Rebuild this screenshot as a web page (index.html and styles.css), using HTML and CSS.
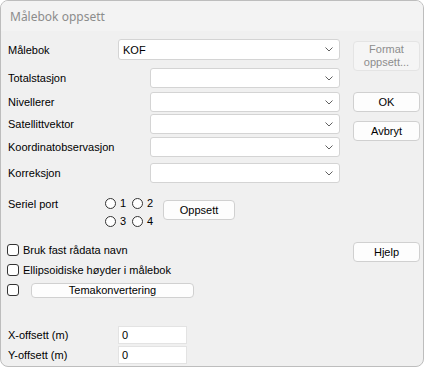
FILE: index.html
```html
<!DOCTYPE html>
<html>
<head>
<meta charset="utf-8">
<link rel="stylesheet" href="styles.css">
</head>
<body>
<div class="window">
  <div class="titlebar">Målebok oppsett</div>
  <div class="content">
    <div class="main">
      <div class="row row-malebok">
        <span class="label w-wide">Målebok</span>
        <div class="combo combo-wide"><span class="combo-text">KOF</span><svg class="chev" width="8" height="5" viewBox="0 0 8 5"><polyline points="0.5,0.5 4,4 7.5,0.5" fill="none" stroke="#606060" stroke-width="1"/></svg></div>
      </div>
      <div class="row row-total">
        <span class="label w-narrow">Totalstasjon</span>
        <div class="combo"><span class="combo-text"></span><svg class="chev" width="8" height="5" viewBox="0 0 8 5"><polyline points="0.5,0.5 4,4 7.5,0.5" fill="none" stroke="#606060" stroke-width="1"/></svg></div>
      </div>
      <div class="row row-niv">
        <span class="label w-narrow">Nivellerer</span>
        <div class="combo"><span class="combo-text"></span><svg class="chev" width="8" height="5" viewBox="0 0 8 5"><polyline points="0.5,0.5 4,4 7.5,0.5" fill="none" stroke="#606060" stroke-width="1"/></svg></div>
      </div>
      <div class="row row-sat">
        <span class="label w-narrow">Satellittvektor</span>
        <div class="combo"><span class="combo-text"></span><svg class="chev" width="8" height="5" viewBox="0 0 8 5"><polyline points="0.5,0.5 4,4 7.5,0.5" fill="none" stroke="#606060" stroke-width="1"/></svg></div>
      </div>
      <div class="row row-koord">
        <span class="label w-narrow">Koordinatobservasjon</span>
        <div class="combo"><span class="combo-text"></span><svg class="chev" width="8" height="5" viewBox="0 0 8 5"><polyline points="0.5,0.5 4,4 7.5,0.5" fill="none" stroke="#606060" stroke-width="1"/></svg></div>
      </div>
      <div class="row row-korr">
        <span class="label w-narrow">Korreksjon</span>
        <div class="combo"><span class="combo-text"></span><svg class="chev" width="8" height="5" viewBox="0 0 8 5"><polyline points="0.5,0.5 4,4 7.5,0.5" fill="none" stroke="#606060" stroke-width="1"/></svg></div>
      </div>
      <div class="serial">
        <span class="label serial-label">Seriel port</span>
        <div class="radios">
          <label class="radio"><span class="circle"></span><span class="rtext">1</span></label>
          <label class="radio"><span class="circle"></span><span class="rtext">2</span></label>
          <label class="radio"><span class="circle"></span><span class="rtext">3</span></label>
          <label class="radio"><span class="circle"></span><span class="rtext">4</span></label>
        </div>
        <div class="btn btn-oppsett">Oppsett</div>
      </div>
      <div class="check check-first"><span class="box"></span><span class="ctext">Bruk fast rådata navn</span></div>
      <div class="check check-second"><span class="box"></span><span class="ctext">Ellipsoidiske høyder i målebok</span></div>
      <div class="check check-third"><span class="box"></span><div class="btn btn-tema">Temakonvertering</div></div>
      <div class="offset offset-x"><span class="label w-wide">X-offsett (m)</span><div class="input">0</div></div>
      <div class="offset offset-y"><span class="label w-wide">Y-offsett (m)</span><div class="input">0</div></div>
    </div>
    <div class="side">
      <div class="btn btn-format disabled">Format<br>oppsett...</div>
      <div class="btn btn-ok">OK</div>
      <div class="btn btn-avbryt">Avbryt</div>
      <div class="btn btn-hjelp">Hjelp</div>
    </div>
  </div>
</div>
</body>
</html>
```

FILE: styles.css
```css
html, body {
  margin: 0;
  padding: 0;
  background: #ffffff;
}
body {
  font-family: "Liberation Sans", Arial, sans-serif;
  font-size: 11px;
  color: #000;
}
.window {
  width: 424px;
  height: 367px;
  box-sizing: border-box;
  border: 1px solid #bdbdbd;
  border-radius: 8px;
  background: #f0f0f0;
  overflow: hidden;
}
.titlebar {
  height: 30px;
  line-height: 31px;
  background: #f3f3f3;
  color: #8c8c8c;
  font-family: "Noto Sans", "Open Sans", sans-serif;
  font-size: 12px;
  padding-left: 9px;
}
.content {
  display: flex;
  padding-left: 6px;
}
.main {
  width: 333px;
  display: flex;
  flex-direction: column;
}
.side {
  margin-left: 13px;
  width: 67px;
  display: flex;
  flex-direction: column;
}
.row {
  display: flex;
  align-items: center;
}
.label {
  flex: none;
  white-space: nowrap;
  padding-left: 1px;
  box-sizing: border-box;
}
.w-wide { width: 111px; }
.w-narrow { width: 143px; }
.row-malebok { margin-top: 8px; height: 21px; }
.row-total { margin-top: 8px; }
.row-niv { margin-top: 4px; }
.row-sat { margin-top: 2px; }
.row-koord { margin-top: 3px; }
.row-korr { margin-top: 6px; }
.combo {
  flex: 1;
  height: 20px;
  box-sizing: border-box;
  background: #ffffff;
  border: 1px solid #d4d4d4;
  border-radius: 3px;
  display: flex;
  align-items: center;
  padding: 0 6px 0 4px;
}
.combo-wide { height: 21px; }
.combo-text { flex: 1; }
.chev { flex: none; }

.serial {
  margin-top: 14px;
  display: flex;
  align-items: flex-start;
}
.serial-label {
  width: 98px;
  line-height: 12px;
  padding-top: 1px;
}
.radios {
  display: grid;
  grid-template-columns: 27px 27px;
  row-gap: 7px;
  margin-top: 1px;
}
.radio {
  display: flex;
  align-items: center;
  height: 11px;
}
.circle {
  width: 11px;
  height: 11px;
  box-sizing: border-box;
  border: 1px solid #333;
  border-radius: 50%;
  background: #fff;
  flex: none;
}
.rtext {
  margin-left: 4px;
  line-height: 11px;
}
.btn {
  box-sizing: border-box;
  background: #fdfdfd;
  border: 1px solid #d0d0d0;
  border-radius: 4px;
  display: flex;
  align-items: center;
  justify-content: center;
  text-align: center;
}
.btn-oppsett {
  margin-top: 3px;
  margin-left: 4px;
  width: 72px;
  height: 20px;
}
.check {
  display: flex;
  align-items: center;
  height: 12px;
}
.check-first { margin-top: 17px; }
.check-second { margin-top: 8px; }
.check-third { margin-top: 8px; }
.box {
  width: 12px;
  height: 12px;
  box-sizing: border-box;
  border: 1px solid #333;
  border-radius: 3px;
  background: #fff;
  flex: none;
}
.ctext {
  margin-left: 4px;
}
.btn-tema {
  margin-left: 12px;
  width: 163px;
  height: 15px;
}
.offset {
  display: flex;
  align-items: center;
  height: 18px;
}
.offset-x { margin-top: 30px; }
.offset-y { margin-top: 2px; }
.input {
  width: 69px;
  height: 18px;
  box-sizing: border-box;
  background: #fff;
  border: 1px solid #e3e3e3;
  padding-left: 3px;
  line-height: 16px;
}
.btn-format {
  margin-top: 10px;
  height: 30px;
  line-height: 13px;
}
.disabled {
  background: #f5f5f5;
  border-color: #e4e4e4;
  color: #8d8d8d;
}
.btn-ok { margin-top: 21px; height: 20px; }
.btn-avbryt { margin-top: 9px; height: 20px; }
.btn-hjelp { margin-top: 101px; height: 20px; }
```
